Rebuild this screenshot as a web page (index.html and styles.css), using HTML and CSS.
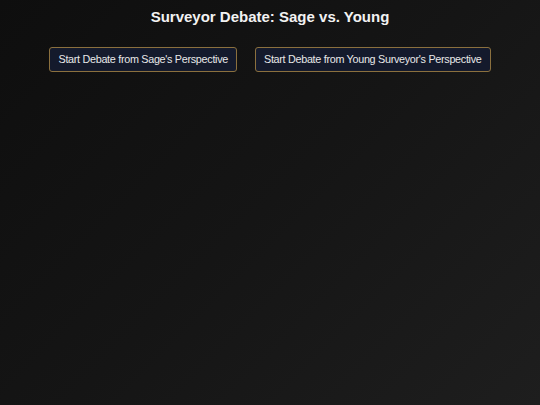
FILE: index.html
```html
<!DOCTYPE html>
<html>
<head>
<meta charset="utf-8">
<link rel="stylesheet" href="styles.css">
</head>
<body>
<div class="page">
  <h1 class="title">Surveyor Debate: Sage vs. Young</h1>
  <div class="actions">
    <button class="btn">Start Debate from Sage's Perspective</button>
    <button class="btn">Start Debate from Young Surveyor's Perspective</button>
  </div>
</div>
</body>
</html>
```
FILE: styles.css
```css
html, body {
  margin: 0;
  padding: 0;
  height: 100%;
}
body {
  background: linear-gradient(135deg, #0e0e0e 0%, #151515 50%, #1e1e1e 100%);
  font-family: "Liberation Sans", Arial, sans-serif;
  color: #fff;
}
.page {
  display: flex;
  flex-direction: column;
  align-items: center;
  padding-top: 8px;
}
.title {
  margin: 0;
  font-size: 15px;
  font-weight: bold;
  line-height: 18px;
  color: #f2f2f2;
}
.actions {
  display: flex;
  gap: 18px;
  margin-top: 21px;
}
.btn {
  font-family: "Liberation Sans", Arial, sans-serif;
  font-size: 10.8px;
  letter-spacing: -0.3px;
  line-height: 13px;
  color: #e8e8e8;
  background: #141a2c;
  border: 1px solid #8b703e;
  border-radius: 3px;
  padding: 5px 8px;
  cursor: pointer;
}
```
